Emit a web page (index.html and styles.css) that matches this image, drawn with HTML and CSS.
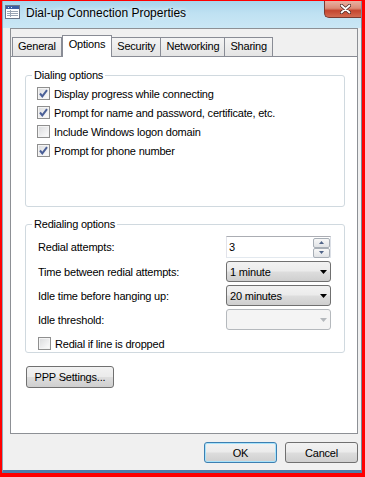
FILE: index.html
```html
<!DOCTYPE html>
<html lang="en">
<head>
    <meta charset="UTF-8">
    <meta name="viewport" content="width=device-width, initial-scale=1.0">
    <title>Dial-up Connection Properties</title>
    <link rel="stylesheet" href="styles.css">
</head>
<body>
    <div class="screen">
        <div class="window">
            <div class="titlebar">
                <svg class="app-icon" width="15" height="14" viewBox="0 0 15 14">
                    <rect x="0.5" y="0.5" width="14" height="13" fill="#fff" stroke="#6a7688"/>
                    <rect x="1" y="1" width="13" height="3" fill="#3a5ea6"/>
                    <path d="M3 2.5h1M6 2.5h1" stroke="#dfe8f6"/>
                    <path d="M2 6.5h11M2 8.5h11M2 10.5h11" stroke="#9aa5b4"/>
                    <path d="M5.5 5v7" stroke="#9aa5b4"/>
                </svg>
                <span class="title">Dial-up Connection Properties</span>
                <button class="close-btn" aria-label="Close">
                    <svg width="11" height="10" viewBox="0 0 11 10">
                        <path d="M1.5 1.5l8 7M9.5 1.5l-8 7" stroke="#4a2a26" stroke-width="3.4" stroke-linecap="round"/>
                        <path d="M1.5 1.5l8 7M9.5 1.5l-8 7" stroke="#fff" stroke-width="1.8" stroke-linecap="round"/>
                    </svg>
                </button>
            </div>

            <div class="body">
                <div class="client">
                    <div class="tabs">
                        <div class="tab">General</div>
                        <div class="tab active">Options</div>
                        <div class="tab">Security</div>
                        <div class="tab">Networking</div>
                        <div class="tab">Sharing</div>
                    </div>

                    <div class="panel">
                        <fieldset class="group">
                            <legend>Dialing options</legend>
                            <div class="group-body dialing">
                                <div class="check-row">
                                    <span class="checkbox">
                                        <svg width="11" height="11" viewBox="0 0 11 11"><path d="M2 5.5l2.3 2.8L9 2.2" fill="none" stroke="#4a5f97" stroke-width="2"/></svg>
                                    </span>
                                    <span>Display progress while connecting</span>
                                </div>
                                <div class="check-row">
                                    <span class="checkbox">
                                        <svg width="11" height="11" viewBox="0 0 11 11"><path d="M2 5.5l2.3 2.8L9 2.2" fill="none" stroke="#4a5f97" stroke-width="2"/></svg>
                                    </span>
                                    <span>Prompt for name and password, certificate, etc.</span>
                                </div>
                                <div class="check-row">
                                    <span class="checkbox"></span>
                                    <span>Include Windows logon domain</span>
                                </div>
                                <div class="check-row">
                                    <span class="checkbox">
                                        <svg width="11" height="11" viewBox="0 0 11 11"><path d="M2 5.5l2.3 2.8L9 2.2" fill="none" stroke="#4a5f97" stroke-width="2"/></svg>
                                    </span>
                                    <span>Prompt for phone number</span>
                                </div>
                            </div>
                        </fieldset>

                        <fieldset class="group redial-group">
                            <legend>Redialing options</legend>
                            <div class="group-body redialing">
                                <span class="field-label">Redial attempts:</span>
                                <div class="spinner">
                                    <span>3</span>
                                    <div class="spin-buttons">
                                        <span class="spin">
                                            <svg width="5" height="3" viewBox="0 0 5 3"><path d="M0 3h5L2.5 0z" fill="#4f6488"/></svg>
                                        </span>
                                        <span class="spin">
                                            <svg width="5" height="3" viewBox="0 0 5 3"><path d="M0 0h5L2.5 3z" fill="#4f6488"/></svg>
                                        </span>
                                    </div>
                                </div>

                                <span class="field-label">Time between redial attempts:</span>
                                <div class="combo">
                                    <span>1 minute</span>
                                    <svg width="7" height="4" viewBox="0 0 7 4"><path d="M0 0h7L3.5 4z" fill="#000"/></svg>
                                </div>

                                <span class="field-label">Idle time before hanging up:</span>
                                <div class="combo">
                                    <span>20 minutes</span>
                                    <svg width="7" height="4" viewBox="0 0 7 4"><path d="M0 0h7L3.5 4z" fill="#000"/></svg>
                                </div>

                                <span class="field-label">Idle threshold:</span>
                                <div class="combo disabled">
                                    <span></span>
                                    <svg width="7" height="4" viewBox="0 0 7 4"><path d="M0 0h7L3.5 4z" fill="#b4b8bc"/></svg>
                                </div>

                                <div class="check-row span-all">
                                    <span class="checkbox"></span>
                                    <span>Redial if line is dropped</span>
                                </div>
                            </div>
                        </fieldset>

                        <button class="btn ppp-btn">PPP Settings...</button>
                    </div>
                </div>

                <div class="actions">
                    <button class="btn default">OK</button>
                    <button class="btn">Cancel</button>
                </div>
            </div>
        </div>
    </div>
</body>
</html>
```

FILE: styles.css
```css
:root {
    --dialog-bg: #f0f0f0;
    --tab-border: #898c95;
    --group-border: #d0d9df;
    --btn-border: #707070;
    --btn-face: linear-gradient(#f2f2f2 0%, #ebebeb 48%, #dddddd 52%, #cfcfcf 100%);
}

* {
    box-sizing: border-box;
}

body {
    margin: 0;
    font-family: "Liberation Sans", Arial, sans-serif;
    font-size: 11px;
    letter-spacing: -0.2px;
    color: #000;
}

.screen {
    width: 365px;
    height: 477px;
    border: solid #ff0000;
    border-width: 1px 3px 4px 2px;
}

.window {
    height: 100%;
    display: flex;
    flex-direction: column;
    background: var(--dialog-bg);
    border-left: 1px solid #8ea4b9;
    border-right: 1px solid #7d8a98;
    border-bottom: 3px solid #4f7fa9;
}

/* title bar */
.titlebar {
    height: 27px;
    display: flex;
    align-items: flex-start;
    padding-left: 2px;
    background: linear-gradient(#a8d4ec 0%, #bfe1f2 45%, #cae7f5 100%);
}

.app-icon {
    margin-top: 4px;
    flex-shrink: 0;
}

.title {
    margin: 5px 0 0 6px;
    font-size: 12px;
    letter-spacing: 0;
    line-height: 15px;
    text-shadow: 0 0 5px #fff;
}

.close-btn {
    margin-left: auto;
    width: 37px;
    height: 17px;
    padding: 0 0 0 4px;
    border: 1px solid #7a3a30;
    border-top: none;
    border-right: none;
    border-radius: 0 0 0 5px;
    background: linear-gradient(#e8b1a2 0%, #dc8c78 45%, #c4462f 60%, #d36a50 100%);
    display: flex;
    align-items: center;
    justify-content: center;
}

/* dialog body */
.body {
    flex: 1;
    display: flex;
    flex-direction: column;
    padding: 0 3px 0 7px;
}

.client {
    height: 406px;
    display: flex;
    flex-direction: column;
    border: 1px solid #8d9095;
}

.tabs {
    height: 27px;
    display: flex;
    align-items: flex-end;
    padding-left: 1px;
}

.tab {
    height: 19px;
    padding: 0 5px;
    line-height: 17px;
    border: 1px solid var(--tab-border);
    border-bottom: none;
    background: linear-gradient(#f4f4f4, #e4e4e4);
}

.tab + .tab {
    border-left: none;
}

.tab.active {
    position: relative;
    z-index: 1;
    height: 22px;
    margin-bottom: -1px;
    padding: 0 6px;
    line-height: 17px;
    border-left: 1px solid var(--tab-border);
    background: #fff;
}

.tab.active + .tab {
    border-left: none;
}

.panel {
    flex: 1;
    display: flex;
    flex-direction: column;
    align-items: flex-start;
    background: #fff;
    border-top: 1px solid var(--tab-border);
    padding: 12px 12px 0 14px;
}

/* group boxes */
.group {
    width: 320px;
    margin: 0;
    padding: 0;
    border: 1px solid var(--group-border);
    border-radius: 3px;
}

.group legend {
    margin-left: 6px;
    padding: 0 2px;
    line-height: 13px;
}

.redial-group {
    margin-top: 11px;
}

.group-body.dialing {
    padding: 2px 0 46px 11px;
}

.group-body.redialing {
    display: grid;
    grid-template-columns: 1fr 105px;
    grid-template-rows: 22px 21px 21px 21px 19px;
    row-gap: 3px;
    align-items: center;
    padding: 5px 13px 0 12px;
}

.span-all {
    grid-column: 1 / -1;
    margin-top: 2px;
}

.check-row {
    height: 19px;
    display: flex;
    align-items: center;
    gap: 4px;
}

.checkbox {
    width: 13px;
    height: 13px;
    display: flex;
    align-items: center;
    justify-content: center;
    border: 1px solid #8f8f8f;
    background: linear-gradient(135deg, #d9dadc 0%, #f3f3f4 70%, #fdfdfd 100%);
    box-shadow: inset 0 0 0 1px #f4f4f4;
}

.redialing .checkbox {
    margin-left: 0;
}

/* inputs */
.spinner {
    height: 22px;
    display: flex;
    align-items: center;
    padding-left: 2px;
    border: 1px solid #abadb3;
    border-color: #abadb3 #dbdfe6 #e3e9ef #e2e3ea;
    background: #fff;
}

.spin-buttons {
    margin-left: auto;
    display: flex;
    flex-direction: column;
    gap: 0;
    padding-top: 1px;
}

.spin {
    width: 17px;
    height: 10px;
    display: flex;
    align-items: center;
    justify-content: center;
    border: 1px solid #a7aeb6;
    border-radius: 2px;
    background: linear-gradient(#f7f7f7, #e1e3e6);
}

.combo {
    height: 21px;
    display: flex;
    align-items: center;
    justify-content: space-between;
    padding: 0 3px 0 3px;
    border: 1px solid var(--btn-border);
    border-radius: 3px;
    background: var(--btn-face);
}

.combo.disabled {
    border-color: #b5b9bd;
    background: #f4f4f4;
}

/* buttons */
.btn {
    height: 21px;
    padding: 0;
    font: inherit;
    letter-spacing: inherit;
    color: #000;
    border: 1px solid var(--btn-border);
    border-radius: 3px;
    background: var(--btn-face);
}

.ppp-btn {
    width: 88px;
    height: 22px;
    margin: 13px 0 0 1px;
}

.actions {
    display: flex;
    justify-content: flex-end;
    gap: 8px;
    padding-top: 8px;
}

.actions .btn {
    width: 73px;
}

.btn.default {
    border-color: #3c7fb1;
    box-shadow: inset 0 0 0 1px #a8e3fb;
}
```
